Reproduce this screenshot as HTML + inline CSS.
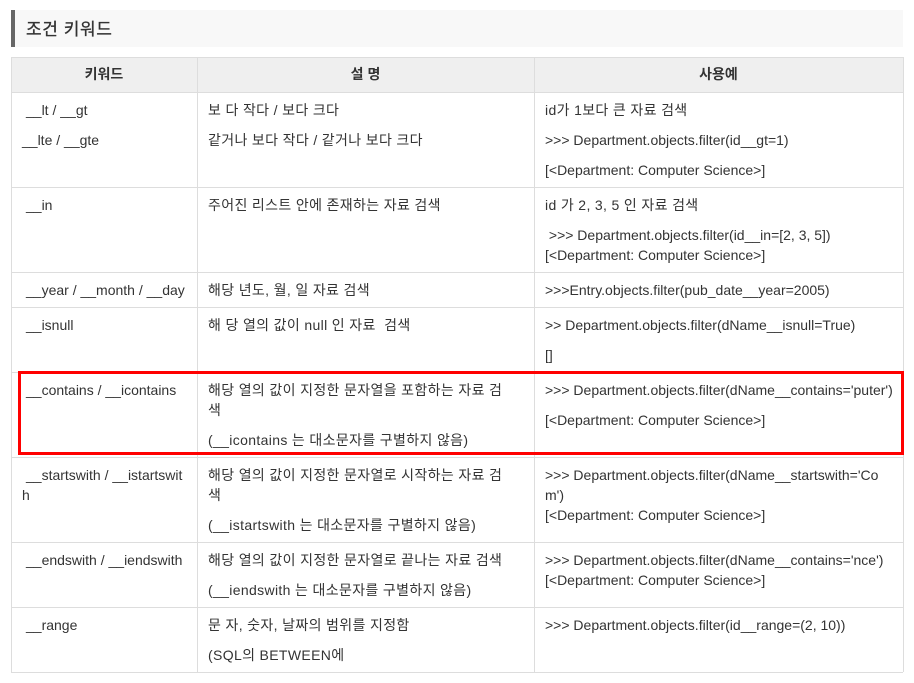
<html><head><style>
body{margin:0;background:#fff;font-family:"Liberation Sans","Noto Sans CJK KR",sans-serif;font-size:14px;color:#333;}
.t{position:absolute;line-height:20px;white-space:nowrap}
.k{letter-spacing:0.35px}
.h{position:absolute;top:57px;height:35px;line-height:35px;text-align:center;font-weight:bold;background:#efefef}
.hl{position:absolute;height:1px;background:#ddd;left:11px;width:892px}
.vl{position:absolute;width:1px;background:#ddd;top:57px;height:615px}
</style></head><body>
<div style="position:absolute;left:11px;top:10px;width:892px;height:37px;background:#f8f8f8;border-left:4px solid #666;box-sizing:border-box"></div>
<div class="t" style="left:26px;top:19px;font-size:17px;line-height:22px;letter-spacing:0.6px;-webkit-text-stroke:0.3px #333">조건 키워드</div>
<div class="h" style="left:11px;width:186px">키워드</div>
<div class="h" style="left:197px;width:337px">설 명</div>
<div class="h" style="left:534px;width:369px">사용예</div>
<div class="hl" style="top:57px"></div><div class="hl" style="top:92px"></div><div class="hl" style="top:187px"></div><div class="hl" style="top:272px"></div><div class="hl" style="top:307px"></div><div class="hl" style="top:372px"></div><div class="hl" style="top:457px"></div><div class="hl" style="top:542px"></div><div class="hl" style="top:607px"></div><div class="hl" style="top:672px"></div>
<div class="vl" style="left:11px"></div><div class="vl" style="left:197px"></div><div class="vl" style="left:534px"></div><div class="vl" style="left:903px"></div>
<div style="position:absolute;left:18px;top:371px;width:886px;height:84px;border:3px solid #f00;box-sizing:border-box"></div>

<div class="t" style="left:26px;top:100px">__lt / __gt</div>
<div class="t" style="left:22px;top:130px">__lte / __gte</div>
<div class="t k" style="left:208px;top:100px">보 다 작다 / 보다 크다</div>
<div class="t k" style="left:208px;top:130px">같거나 보다 작다 / 같거나 보다 크다</div>
<div class="t k" style="left:545px;top:100px">id가 1보다 큰 자료 검색</div>
<div class="t" style="left:545px;top:130px">&gt;&gt;&gt; Department.objects.filter(id__gt=1)</div>
<div class="t" style="left:545px;top:160px">[&lt;Department: Computer Science&gt;]</div>

<div class="t" style="left:26px;top:195px">__in</div>
<div class="t k" style="left:208px;top:195px">주어진 리스트 안에 존재하는 자료 검색</div>
<div class="t k" style="left:545px;top:195px">id 가 2, 3, 5 인 자료 검색</div>
<div class="t" style="left:545px;top:225px">&nbsp;&gt;&gt;&gt; Department.objects.filter(id__in=[2, 3, 5])</div>
<div class="t" style="left:545px;top:245px">[&lt;Department: Computer Science&gt;]</div>

<div class="t" style="left:26px;top:280px">__year / __month / __day</div>
<div class="t k" style="left:208px;top:280px">해당 년도, 월, 일 자료 검색</div>
<div class="t" style="left:545px;top:280px">&gt;&gt;&gt;Entry.objects.filter(pub_date__year=2005)</div>

<div class="t" style="left:26px;top:315px">__isnull</div>
<div class="t k" style="left:208px;top:315px">해 당 열의 값이 null 인 자료&nbsp; 검색</div>
<div class="t" style="left:545px;top:315px">&gt;&gt; Department.objects.filter(dName__isnull=True)</div>
<div class="t" style="left:545px;top:345px">[]</div>

<div class="t" style="left:26px;top:380px">__contains / __icontains</div>
<div class="t k" style="left:208px;top:380px">해당 열의 값이 지정한 문자열을 포함하는 자료 검</div>
<div class="t k" style="left:208px;top:400px">색</div>
<div class="t k" style="left:208px;top:430px">(__icontains 는 대소문자를 구별하지 않음)</div>
<div class="t" style="left:545px;top:380px">&gt;&gt;&gt; Department.objects.filter(dName__contains='puter')</div>
<div class="t" style="left:545px;top:410px">[&lt;Department: Computer Science&gt;]</div>

<div class="t" style="left:26px;top:465px">__startswith / __istartswit</div>
<div class="t" style="left:22px;top:485px">h</div>
<div class="t k" style="left:208px;top:465px">해당 열의 값이 지정한 문자열로 시작하는 자료 검</div>
<div class="t k" style="left:208px;top:485px">색</div>
<div class="t k" style="left:208px;top:515px">(__istartswith 는 대소문자를 구별하지 않음)</div>
<div class="t" style="left:545px;top:465px">&gt;&gt;&gt; Department.objects.filter(dName__startswith='Co</div>
<div class="t" style="left:545px;top:485px">m')</div>
<div class="t" style="left:545px;top:505px">[&lt;Department: Computer Science&gt;]</div>

<div class="t" style="left:26px;top:550px">__endswith / __iendswith</div>
<div class="t k" style="left:208px;top:550px">해당 열의 값이 지정한 문자열로 끝나는 자료 검색</div>
<div class="t k" style="left:208px;top:580px">(__iendswith 는 대소문자를 구별하지 않음)</div>
<div class="t" style="left:545px;top:550px">&gt;&gt;&gt; Department.objects.filter(dName__contains='nce')</div>
<div class="t" style="left:545px;top:570px">[&lt;Department: Computer Science&gt;]</div>

<div class="t" style="left:26px;top:615px">__range</div>
<div class="t k" style="left:208px;top:615px">문 자, 숫자, 날짜의 범위를 지정함</div>
<div class="t k" style="left:208px;top:645px">(SQL의 BETWEEN에</div>
<div class="t" style="left:545px;top:615px">&gt;&gt;&gt; Department.objects.filter(id__range=(2, 10))</div>
</body></html>
